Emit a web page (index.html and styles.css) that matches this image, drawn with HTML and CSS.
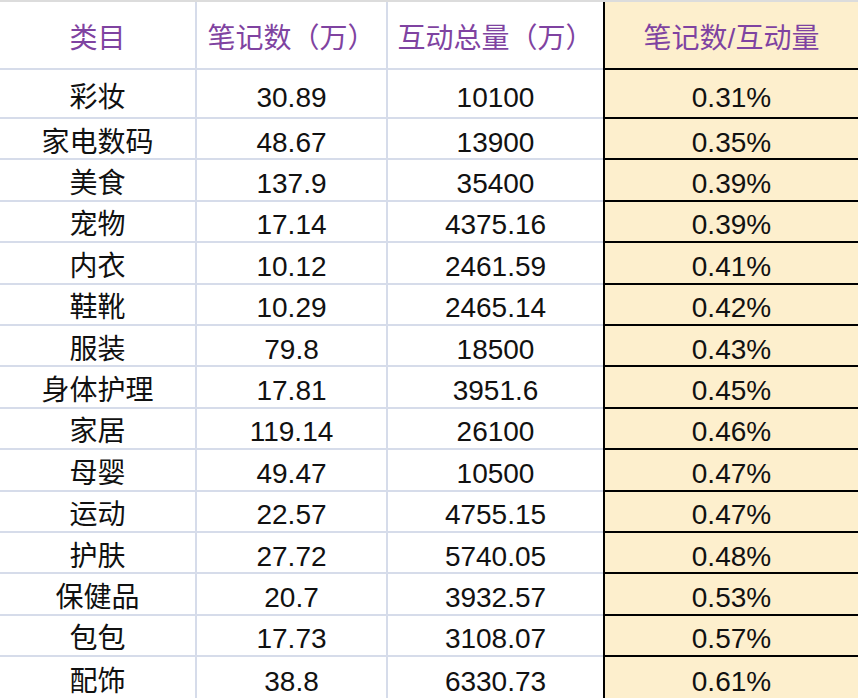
FILE: index.html
```html
<!DOCTYPE html>
<html lang="zh-CN">
<head>
<meta charset="utf-8">
<title>笔记数/互动量</title>
<link rel="stylesheet" href="styles.css">
</head>
<body>
<table class="sheet">
  <colgroup>
    <col class="c1"><col class="c2"><col class="c3"><col class="c4">
  </colgroup>
  <thead>
    <tr class="head">
      <th>类目</th><th>笔记数（万）</th><th>互动总量（万）</th><th class="hl">笔记数/互动量</th>
    </tr>
  </thead>
  <tbody>
    <tr class="first"><td>彩妆</td><td>30.89</td><td>10100</td><td class="hl">0.31%</td></tr>
    <tr><td>家电数码</td><td>48.67</td><td>13900</td><td class="hl">0.35%</td></tr>
    <tr><td>美食</td><td>137.9</td><td>35400</td><td class="hl">0.39%</td></tr>
    <tr><td>宠物</td><td>17.14</td><td>4375.16</td><td class="hl">0.39%</td></tr>
    <tr><td>内衣</td><td>10.12</td><td>2461.59</td><td class="hl">0.41%</td></tr>
    <tr><td>鞋靴</td><td>10.29</td><td>2465.14</td><td class="hl">0.42%</td></tr>
    <tr><td>服装</td><td>79.8</td><td>18500</td><td class="hl">0.43%</td></tr>
    <tr><td>身体护理</td><td>17.81</td><td>3951.6</td><td class="hl">0.45%</td></tr>
    <tr><td>家居</td><td>119.14</td><td>26100</td><td class="hl">0.46%</td></tr>
    <tr><td>母婴</td><td>49.47</td><td>10500</td><td class="hl">0.47%</td></tr>
    <tr><td>运动</td><td>22.57</td><td>4755.15</td><td class="hl">0.47%</td></tr>
    <tr><td>护肤</td><td>27.72</td><td>5740.05</td><td class="hl">0.48%</td></tr>
    <tr><td>保健品</td><td>20.7</td><td>3932.57</td><td class="hl">0.53%</td></tr>
    <tr><td>包包</td><td>17.73</td><td>3108.07</td><td class="hl">0.57%</td></tr>
    <tr class="last"><td>配饰</td><td>38.8</td><td>6330.73</td><td class="hl">0.61%</td></tr>
  </tbody>
</table>
</body>
</html>
```
FILE: styles.css
```css
html, body {
  margin: 0;
  padding: 0;
  background: #ffffff;
  overflow: hidden;
}

.sheet {
  table-layout: fixed;
  width: 858px;
  border-collapse: separate;
  border-spacing: 0;
  border-top: 2px solid #dcdcdc;
  font-family: "Liberation Sans", "Noto Sans CJK SC", sans-serif;
  font-size: 28px;
  color: #111111;
}

.c1 { width: 197px; }
.c2 { width: 191px; }
.c3 { width: 215px; }
.c4 { width: 255px; }

.sheet th,
.sheet td {
  padding: 8px 0 0 0;
  text-align: center;
  vertical-align: middle;
  line-height: 1;
  border-right: 2px solid #d6dcea;
  border-bottom: 2px solid #d6dcea;
  white-space: nowrap;
  overflow: hidden;
}

.sheet th {
  font-weight: normal;
  color: #7f43a1;
}

.head {
  height: 68px;
}

.first {
  height: 49px;
}

tbody tr {
  height: 41.4px;
}

.sheet .hl {
  background: #fdefcd;
  border-left: 2px solid #000000;
  border-right: none;
  border-bottom: 2px solid #000000;
}

.sheet td:nth-child(3),
.sheet th:nth-child(3) {
  border-right: none;
}

.sheet .last td {
  border-bottom: none;
}
```
